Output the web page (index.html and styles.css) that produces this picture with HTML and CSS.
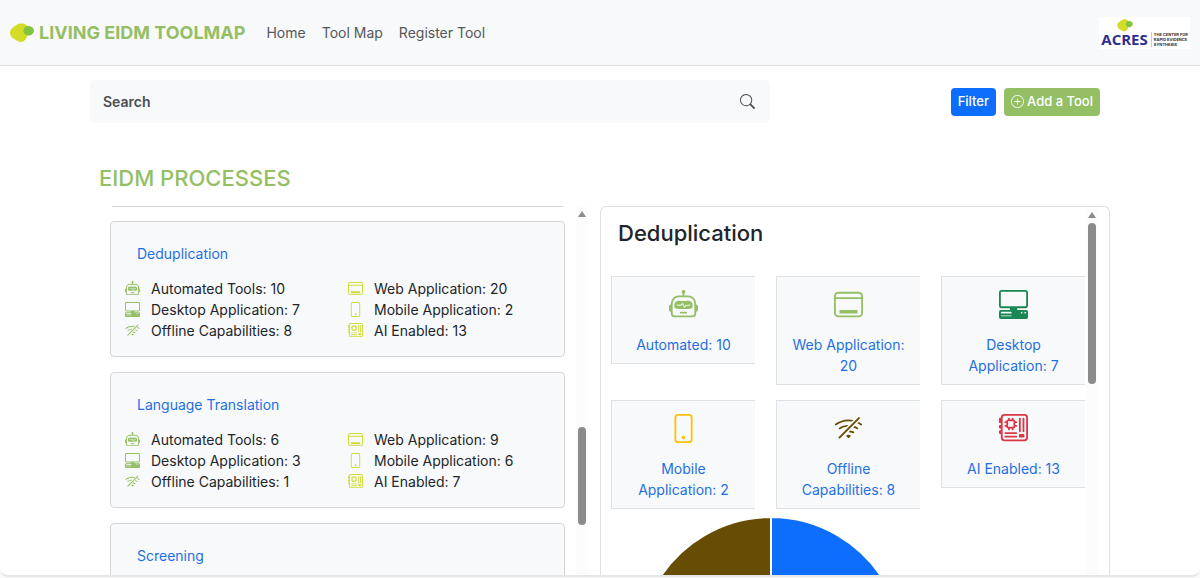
FILE: index.html
```html
<!DOCTYPE html>
<html lang="en">
<head>
    <meta charset="UTF-8">
    <meta name="viewport" content="width=device-width, initial-scale=1">
    <title>Living EIDM Toolmap</title>
    <link rel="stylesheet" href="styles.css">
</head>
<body>
    <!-- icon set -->
    <svg class="sprite" aria-hidden="true">
        <symbol id="robot" viewBox="0 0 16 16">
            <path d="M6 12.5a.5.5 0 0 1 .5-.5h3a.5.5 0 0 1 0 1h-3a.5.5 0 0 1-.5-.5M3 8.062C3 6.76 4.235 5.765 5.53 5.886a26.6 26.6 0 0 0 4.94 0C11.765 5.765 13 6.76 13 8.062v1.157a.93.93 0 0 1-.765.935c-.845.147-2.34.346-4.235.346s-3.39-.2-4.235-.346A.93.93 0 0 1 3 9.219zm4.542-.827a.25.25 0 0 0-.217.068l-.92.9a25 25 0 0 1-1.871-.183.25.25 0 0 0-.068.495c.55.076 1.232.149 2.02.193a.25.25 0 0 0 .189-.071l.754-.736.847 1.71a.25.25 0 0 0 .404.062l.932-.97a25 25 0 0 0 1.922-.188.25.25 0 0 0-.068-.495c-.538.074-1.207.145-1.98.189a.25.25 0 0 0-.166.076l-.754.785-.842-1.7a.25.25 0 0 0-.182-.135"/>
            <path d="M8.5 1.866a1 1 0 1 0-1 0V3h-2A4.5 4.5 0 0 0 1 7.5V8a1 1 0 0 0-1 1v2a1 1 0 0 0 1 1v1a2 2 0 0 0 2 2h10a2 2 0 0 0 2-2v-1a1 1 0 0 0 1-1V9a1 1 0 0 0-1-1v-.5A4.5 4.5 0 0 0 10.5 3h-2zM14 7.5V13a1 1 0 0 1-1 1H3a1 1 0 0 1-1-1V7.5A3.5 3.5 0 0 1 5.5 4h5A3.5 3.5 0 0 1 14 7.5"/>
        </symbol>
        <symbol id="window" viewBox="0 0 16 16">
            <path d="M3.5 11a.5.5 0 0 0-.5.5v1a.5.5 0 0 0 .5.5h9a.5.5 0 0 0 .5-.5v-1a.5.5 0 0 0-.5-.5z"/>
            <path d="M2.375 1A2.366 2.366 0 0 0 0 3.357v9.286A2.366 2.366 0 0 0 2.375 15h11.25A2.366 2.366 0 0 0 16 12.643V3.357A2.366 2.366 0 0 0 13.625 1zM1 3.357C1 2.612 1.611 2 2.375 2h11.25C14.389 2 15 2.612 15 3.357V4H1zM1 5h14v7.643c0 .745-.611 1.357-1.375 1.357H2.375A1.366 1.366 0 0 1 1 12.643z"/>
        </symbol>
        <symbol id="desktop" viewBox="0 0 16 16">
            <path d="M1.5 0A1.5 1.5 0 0 0 0 1.5v7A1.5 1.5 0 0 0 1.5 10H6v1H1a1 1 0 0 0-1 1v3a1 1 0 0 0 1 1h14a1 1 0 0 0 1-1v-3a1 1 0 0 0-1-1h-5v-1h4.5A1.5 1.5 0 0 0 16 8.5v-7A1.5 1.5 0 0 0 14.5 0zm0 1h13a.5.5 0 0 1 .5.5v7a.5.5 0 0 1-.5.5h-13a.5.5 0 0 1-.5-.5v-7a.5.5 0 0 1 .5-.5M12 12.5a.5.5 0 1 1 1 0 .5.5 0 0 1-1 0m2 0a.5.5 0 1 1 1 0 .5.5 0 0 1-1 0M1.5 12h5a.5.5 0 0 1 0 1h-5a.5.5 0 0 1 0-1M1 14.25a.25.25 0 0 1 .25-.25h5.5a.25.25 0 1 1 0 .5h-5.5a.25.25 0 0 1-.25-.25"/>
        </symbol>
        <symbol id="phone" viewBox="0 0 16 16">
            <path d="M11 1a1 1 0 0 1 1 1v12a1 1 0 0 1-1 1H5a1 1 0 0 1-1-1V2a1 1 0 0 1 1-1zM5 0a2 2 0 0 0-2 2v12a2 2 0 0 0 2 2h6a2 2 0 0 0 2-2V2a2 2 0 0 0-2-2z"/>
            <path d="M8 14a1 1 0 1 0 0-2 1 1 0 0 0 0 2"/>
        </symbol>
        <symbol id="offline" viewBox="0 0 16 16">
            <path d="M10.706 3.294A12.6 12.6 0 0 0 8 3C5.259 3 2.723 3.882.663 5.379a.485.485 0 0 0-.048.736.52.52 0 0 0 .668.05A11.45 11.45 0 0 1 8 4q.946 0 1.852.148zM8 6c-1.905 0-3.68.56-5.166 1.526a.48.48 0 0 0-.063.745.525.525 0 0 0 .652.065 8.45 8.45 0 0 1 3.51-1.27zm2.596 1.404.785-.785q.947.362 1.785.907a.482.482 0 0 1 .063.745.525.525 0 0 1-.652.065 8.5 8.5 0 0 0-1.98-.932zM8 10l.933-.933a6.5 6.5 0 0 1 2.013.637c.285.145.326.524.1.75l-.015.015a.53.53 0 0 1-.611.09A5.5 5.5 0 0 0 8 10m4.905-4.905.747-.747q.886.451 1.685 1.03a.485.485 0 0 1 .047.737.52.52 0 0 1-.668.05 11.5 11.5 0 0 0-1.811-1.07M9.02 11.78c.238.14.236.464.04.66l-.707.706a.5.5 0 0 1-.707 0l-.707-.707c-.195-.195-.197-.518.04-.66A2 2 0 0 1 8 11.5c.374 0 .723.102 1.021.28zm4.355-9.905a.53.53 0 0 1 .75.75l-10.75 10.75a.53.53 0 0 1-.75-.75z"/>
        </symbol>
        <symbol id="board" viewBox="0 0 16 16">
            <path d="M11.5 2a.5.5 0 0 1 .5.5v7a.5.5 0 0 1-1 0v-7a.5.5 0 0 1 .5-.5m2 0a.5.5 0 0 1 .5.5v7a.5.5 0 0 1-1 0v-7a.5.5 0 0 1 .5-.5m-10 8a.5.5 0 0 0 0 1h6a.5.5 0 0 0 0-1zm0 2a.5.5 0 0 0 0 1h6a.5.5 0 0 0 0-1z"/>
            <path d="M5 3a1 1 0 0 0-1 1h-.5a.5.5 0 0 0 0 1H4v1h-.5a.5.5 0 0 0 0 1H4a1 1 0 0 0 1 1v.5a.5.5 0 0 0 1 0V8h1v.5a.5.5 0 0 0 1 0V8a1 1 0 0 0 1-1h.5a.5.5 0 0 0 0-1H9V5h.5a.5.5 0 0 0 0-1H9a1 1 0 0 0-1-1v-.5a.5.5 0 0 0-1 0V3H6v-.5a.5.5 0 0 0-1 0zm0 1h3v3H5zm6.500 7a.5.5 0 0 0-.5.5v1a.5.5 0 0 0 .5.5h2a.5.5 0 0 0 .5-.5v-1a.5.5 0 0 0-.5-.5z"/>
            <path d="M1 2a2 2 0 0 1 2-2h11a2 2 0 0 1 2 2v11a2 2 0 0 1-2 2H3a2 2 0 0 1-2-2v-2H.5a.5.5 0 0 1-.5-.5v-1A.5.5 0 0 1 .5 9H1V8H.5a.5.5 0 0 1-.5-.5v-1A.5.5 0 0 1 .5 6H1V5H.5a.5.5 0 0 1-.5-.5v-2A.5.5 0 0 1 .5 2zm1 11a1 1 0 0 0 1 1h11a1 1 0 0 0 1-1V2a1 1 0 0 0-1-1H3a1 1 0 0 0-1 1z"/>
        </symbol>
        <symbol id="search-icon" viewBox="0 0 16 16">
            <path d="M11.742 10.344a6.5 6.5 0 1 0-1.397 1.398h-.001q.044.06.098.115l3.85 3.85a1 1 0 0 0 1.415-1.414l-3.85-3.85a1 1 0 0 0-.115-.1zM12 6.5a5.5 5.5 0 1 1-11 0 5.5 5.5 0 0 1 11 0"/>
        </symbol>
        <symbol id="plus" viewBox="0 0 16 16">
            <path d="M8 15A7 7 0 1 1 8 1a7 7 0 0 1 0 14m0 1A8 8 0 1 0 8 0a8 8 0 0 0 0 16"/>
            <path d="M8 4a.5.5 0 0 1 .5.5v3h3a.5.5 0 0 1 0 1h-3v3a.5.5 0 0 1-1 0v-3h-3a.5.5 0 0 1 0-1h3v-3A.5.5 0 0 1 8 4"/>
        </symbol>
        <symbol id="blob" viewBox="0 0 24 20">
            <path fill="#d3dc27" d="M7 1.500C9 .3 12 .2 14 .8c3 1 5 3.200 5 6.200 0 2-1 3.500-1.500 5-.8 3-2.500 6.500-6 7-2.500.5-4.500-1.500-6.500-2.500C2 15 0 13 0 10c0-4 3.500-6 7-8.500z"/>
            <path fill="#83c341" d="M16 3.500c2-1 5-.5 6.500 1 1.500 1.300 1.800 3 1.200 4.500-.8 2.500-3.500 4-6 3.500-2.500-.3-4.500-2-4.300-4.500.1-2 1-3.700 2.600-4.500z"/>
        </symbol>
    </svg>

    <div class="page">
        <nav class="navbar">
            <a class="brand" href="#"><svg class="brand-logo"><use href="#blob"/></svg>LIVING EIDM TOOLMAP</a>
            <div class="nav-links">
                <a href="#">Home</a>
                <a href="#">Tool Map</a>
                <a href="#">Register Tool</a>
            </div>
            <a class="acres" href="#">
                <span class="acres-name"><svg class="acres-logo"><use href="#blob"/></svg>ACRES</span>
                <span class="acres-text">THE CENTER FOR<br>RAPID EVIDENCE<br>SYNTHESIS</span>
            </a>
        </nav>

        <main class="container">
            <div class="toolbar">
                <form class="search">
                    <input type="search" placeholder="Search" aria-label="Search">
                    <button type="button" aria-label="Search"><svg><use href="#search-icon"/></svg></button>
                </form>
                <div class="actions">
                    <button type="button" class="btn btn-primary">Filter</button>
                    <button type="button" class="btn btn-green"><svg><use href="#plus"/></svg>Add a Tool</button>
                </div>
            </div>

            <h1>EIDM PROCESSES</h1>

            <div class="columns">
                <section class="processes">
                    <div class="process-list">
                        <div class="card-end"></div>
                        <article class="card">
                            <h2><a href="#">Deduplication</a></h2>
                            <ul>
                                <li><svg><use href="#robot"/></svg>Automated Tools: 10</li>
                                <li><svg><use href="#window"/></svg>Web Application: 20</li>
                                <li><svg><use href="#desktop"/></svg>Desktop Application: 7</li>
                                <li><svg><use href="#phone"/></svg>Mobile Application: 2</li>
                                <li><svg><use href="#offline"/></svg>Offline Capabilities: 8</li>
                                <li><svg><use href="#board"/></svg>AI Enabled: 13</li>
                            </ul>
                        </article>
                        <article class="card">
                            <h2><a href="#">Language Translation</a></h2>
                            <ul>
                                <li><svg><use href="#robot"/></svg>Automated Tools: 6</li>
                                <li><svg><use href="#window"/></svg>Web Application: 9</li>
                                <li><svg><use href="#desktop"/></svg>Desktop Application: 3</li>
                                <li><svg><use href="#phone"/></svg>Mobile Application: 6</li>
                                <li><svg><use href="#offline"/></svg>Offline Capabilities: 1</li>
                                <li><svg><use href="#board"/></svg>AI Enabled: 7</li>
                            </ul>
                        </article>
                        <article class="card">
                            <h2><a href="#">Screening</a></h2>
                        </article>
                    </div>
                    <div class="scrollbar">
                        <div class="arrow"></div>
                        <div class="thumb thumb-low"></div>
                    </div>
                </section>

                <section class="detail">
                    <div class="detail-body">
                        <h2>Deduplication</h2>
                        <div class="tiles">
                            <a class="tile" href="#"><svg class="green"><use href="#robot"/></svg>Automated: 10</a>
                            <a class="tile" href="#"><svg class="green"><use href="#window"/></svg>Web Application: 20</a>
                            <a class="tile" href="#"><svg class="success"><use href="#desktop"/></svg>Desktop Application: 7</a>
                            <a class="tile" href="#"><svg class="warning"><use href="#phone"/></svg>Mobile Application: 2</a>
                            <a class="tile" href="#"><svg class="brown"><use href="#offline"/></svg>Offline Capabilities: 8</a>
                            <a class="tile" href="#"><svg class="danger"><use href="#board"/></svg>AI Enabled: 13</a>
                        </div>
                        <svg class="chart" viewBox="-133 -133 266 266">
                            <g stroke="#fff" stroke-width="2">
                                <path fill="#0d6efd" d="M0 0V-133A133 133 0 0 1 115 -66Z"/>
                                <path fill="#664d03" d="M0 0V-133A133 133 0 0 0 -115 -66Z"/>
                            </g>
                        </svg>
                    </div>
                    <div class="scrollbar">
                        <div class="arrow"></div>
                        <div class="thumb thumb-top"></div>
                    </div>
                </section>
            </div>
        </main>
    </div>
</body>
</html>
```

FILE: styles.css
```css
* {
    box-sizing: border-box;
}

body {
    margin: 0;
    height: 100vh;
    padding-bottom: 1px;
    background-color: #fafafa;
    color: #212529;
    font-family: Inter, "Liberation Sans", sans-serif;
    font-size: 14px;
    line-height: 21px;
    overflow: hidden;
}

a {
    color: #1f6fe5;
    text-decoration: none;
}

svg {
    display: block;
    flex: none;
    fill: currentColor;
}

h1, h2, ul {
    margin: 0;
    padding: 0;
    font-weight: 400;
}

.sprite {
    position: absolute;
    width: 0;
    height: 0;
}

.page {
    display: flex;
    flex-direction: column;
    height: 100%;
    background-color: #fff;
    border-bottom: 2px solid #e4e5e6;
    border-radius: 8px;
    overflow: hidden;
}

/* navbar */
.navbar {
    display: flex;
    align-items: center;
    height: 66px;
    padding: 0 10px;
    background-color: #f8f9fa;
    border-bottom: 1px solid #dee0e2;
}

.brand {
    display: flex;
    align-items: center;
    gap: 5px;
    color: #94bf65;
    font-size: 18px;
    font-weight: 700;
}

.brand-logo {
    width: 24px;
    height: 20px;
}

.nav-links {
    display: flex;
    gap: 16px;
    margin-left: 21px;
}

.nav-links a {
    color: #54575a;
}

.acres {
    display: flex;
    align-items: flex-end;
    gap: 3px;
    margin-left: auto;
    padding: 2px;
    background-color: #fff;
}

.acres-name {
    color: #2c2f8f;
    font-family: "Open Sans", sans-serif;
    font-size: 15px;
    font-weight: 700;
    line-height: 15px;
}

.acres-logo {
    width: 16px;
    height: 13px;
    margin: 0 auto;
}

.acres-text {
    padding-left: 2px;
    border-left: 1px solid #ccc;
    color: #333;
    font-size: 4px;
    font-weight: 700;
    line-height: 5px;
}

/* search and buttons */
.container {
    display: flex;
    flex-direction: column;
    flex: 1;
    min-height: 0;
    width: 85%;
    margin: 0 auto;
}

.toolbar {
    display: flex;
    justify-content: space-between;
    align-items: center;
    margin-top: 14px;
}

.search {
    display: flex;
    align-items: center;
    width: calc(100% * 2 / 3);
    height: 43px;
    padding: 0 15px 0 13px;
    background-color: #f8f9fa;
    border-radius: 5px;
}

.search input {
    flex: 1;
    padding: 0;
    border: none;
    outline: none;
    background: none;
    font: inherit;
    font-weight: 600;
}

.search input::placeholder {
    color: #4b4f53;
    opacity: 1;
}

.search button {
    padding: 0;
    border: none;
    background: none;
    color: #4b4f53;
}

.search svg {
    width: 15px;
    height: 15px;
}

.actions {
    display: flex;
    gap: 8px;
    margin-right: 10px;
}

.btn {
    display: flex;
    align-items: center;
    gap: 3px;
    height: 28px;
    padding: 0 7px;
    border: none;
    border-radius: 4px;
    color: #fff;
    font: inherit;
    font-size: 13px;
    font-weight: 500;
}

.btn svg {
    width: 13px;
    height: 13px;
}

.btn-primary {
    background-color: #0d6efd;
}

.btn-green {
    background-color: #94bf65;
}

h1 {
    margin: 40px 0 13px 9px;
    color: #94bf65;
    font-size: 22px;
    font-weight: 500;
    line-height: 30px;
}

.columns {
    display: grid;
    grid-template-columns: 1fr 1fr;
    flex: 1;
    min-height: 0;
}

/* left list */
.processes {
    display: flex;
    gap: 11px;
    min-height: 0;
    padding: 0 12px 0 20px;
}

.process-list {
    flex: 1;
    overflow: hidden;
}

.card-end {
    height: 1px;
    margin: 0 2px 14px;
    background-color: #d3d5d8;
}

.card {
    height: 136px;
    margin-bottom: 15px;
    padding: 21px 14px 0;
    background-color: #f8f9fa;
    border: 1px solid #d3d5d8;
    border-radius: 4px;
}

.card h2 {
    margin-left: 12px;
    font-size: 14px;
}

.card ul {
    display: grid;
    grid-template-columns: 223px 1fr;
    margin-top: 14px;
    list-style: none;
}

.card li {
    display: flex;
    align-items: center;
    gap: 11px;
}

.card svg {
    width: 15px;
    height: 15px;
    color: #94bf65;
}

.card li:nth-child(even) svg {
    color: #cddc39;
}

/* scrollbars */
.scrollbar {
    display: flex;
    flex-direction: column;
    align-items: center;
    width: 12px;
    padding-top: 5px;
    background-color: #fcfcfc;
}

.arrow {
    border: 4px solid transparent;
    border-top: none;
    border-bottom: 6px solid #8b8b8b;
}

.thumb {
    width: 8px;
    border-radius: 4px;
    background-color: #8b8b8b;
}

.thumb-low {
    height: 98px;
    margin-top: 210px;
}

.thumb-top {
    height: 161px;
    margin-top: 5px;
}

/* right panel */
.detail {
    display: flex;
    gap: 1px;
    min-height: 0;
    padding: 0 11px 0 10px;
    border: 1px solid #dee2e6;
    border-bottom: none;
    border-radius: 6px 6px 0 0;
}

.detail-body {
    flex: 1;
    overflow: hidden;
}

.detail h2 {
    margin: 11px 0 28px 7px;
    font-size: 22px;
    font-weight: 500;
    line-height: 30px;
}

.tiles {
    display: grid;
    grid-template-columns: repeat(3, 1fr);
    gap: 15px 21px;
    align-items: start;
}

.tile {
    display: flex;
    flex-direction: column;
    align-items: center;
    gap: 15px;
    padding: 13px 12px 8px;
    background-color: #f8f9fa;
    border: 1px solid #dee2e6;
    border-right: none;
    text-align: center;
}

.tile svg {
    width: 29px;
    height: 29px;
}

.green { color: #94bf65; }
.success { color: #198754; }
.warning { color: #ffc107; }
.brown { color: #664d03; }
.danger { color: #dc3545; }

/* pie sits left of the panel's centre */
.chart {
    width: 266px;
    height: 266px;
    margin: 8px 0 0 27px;
}
```
